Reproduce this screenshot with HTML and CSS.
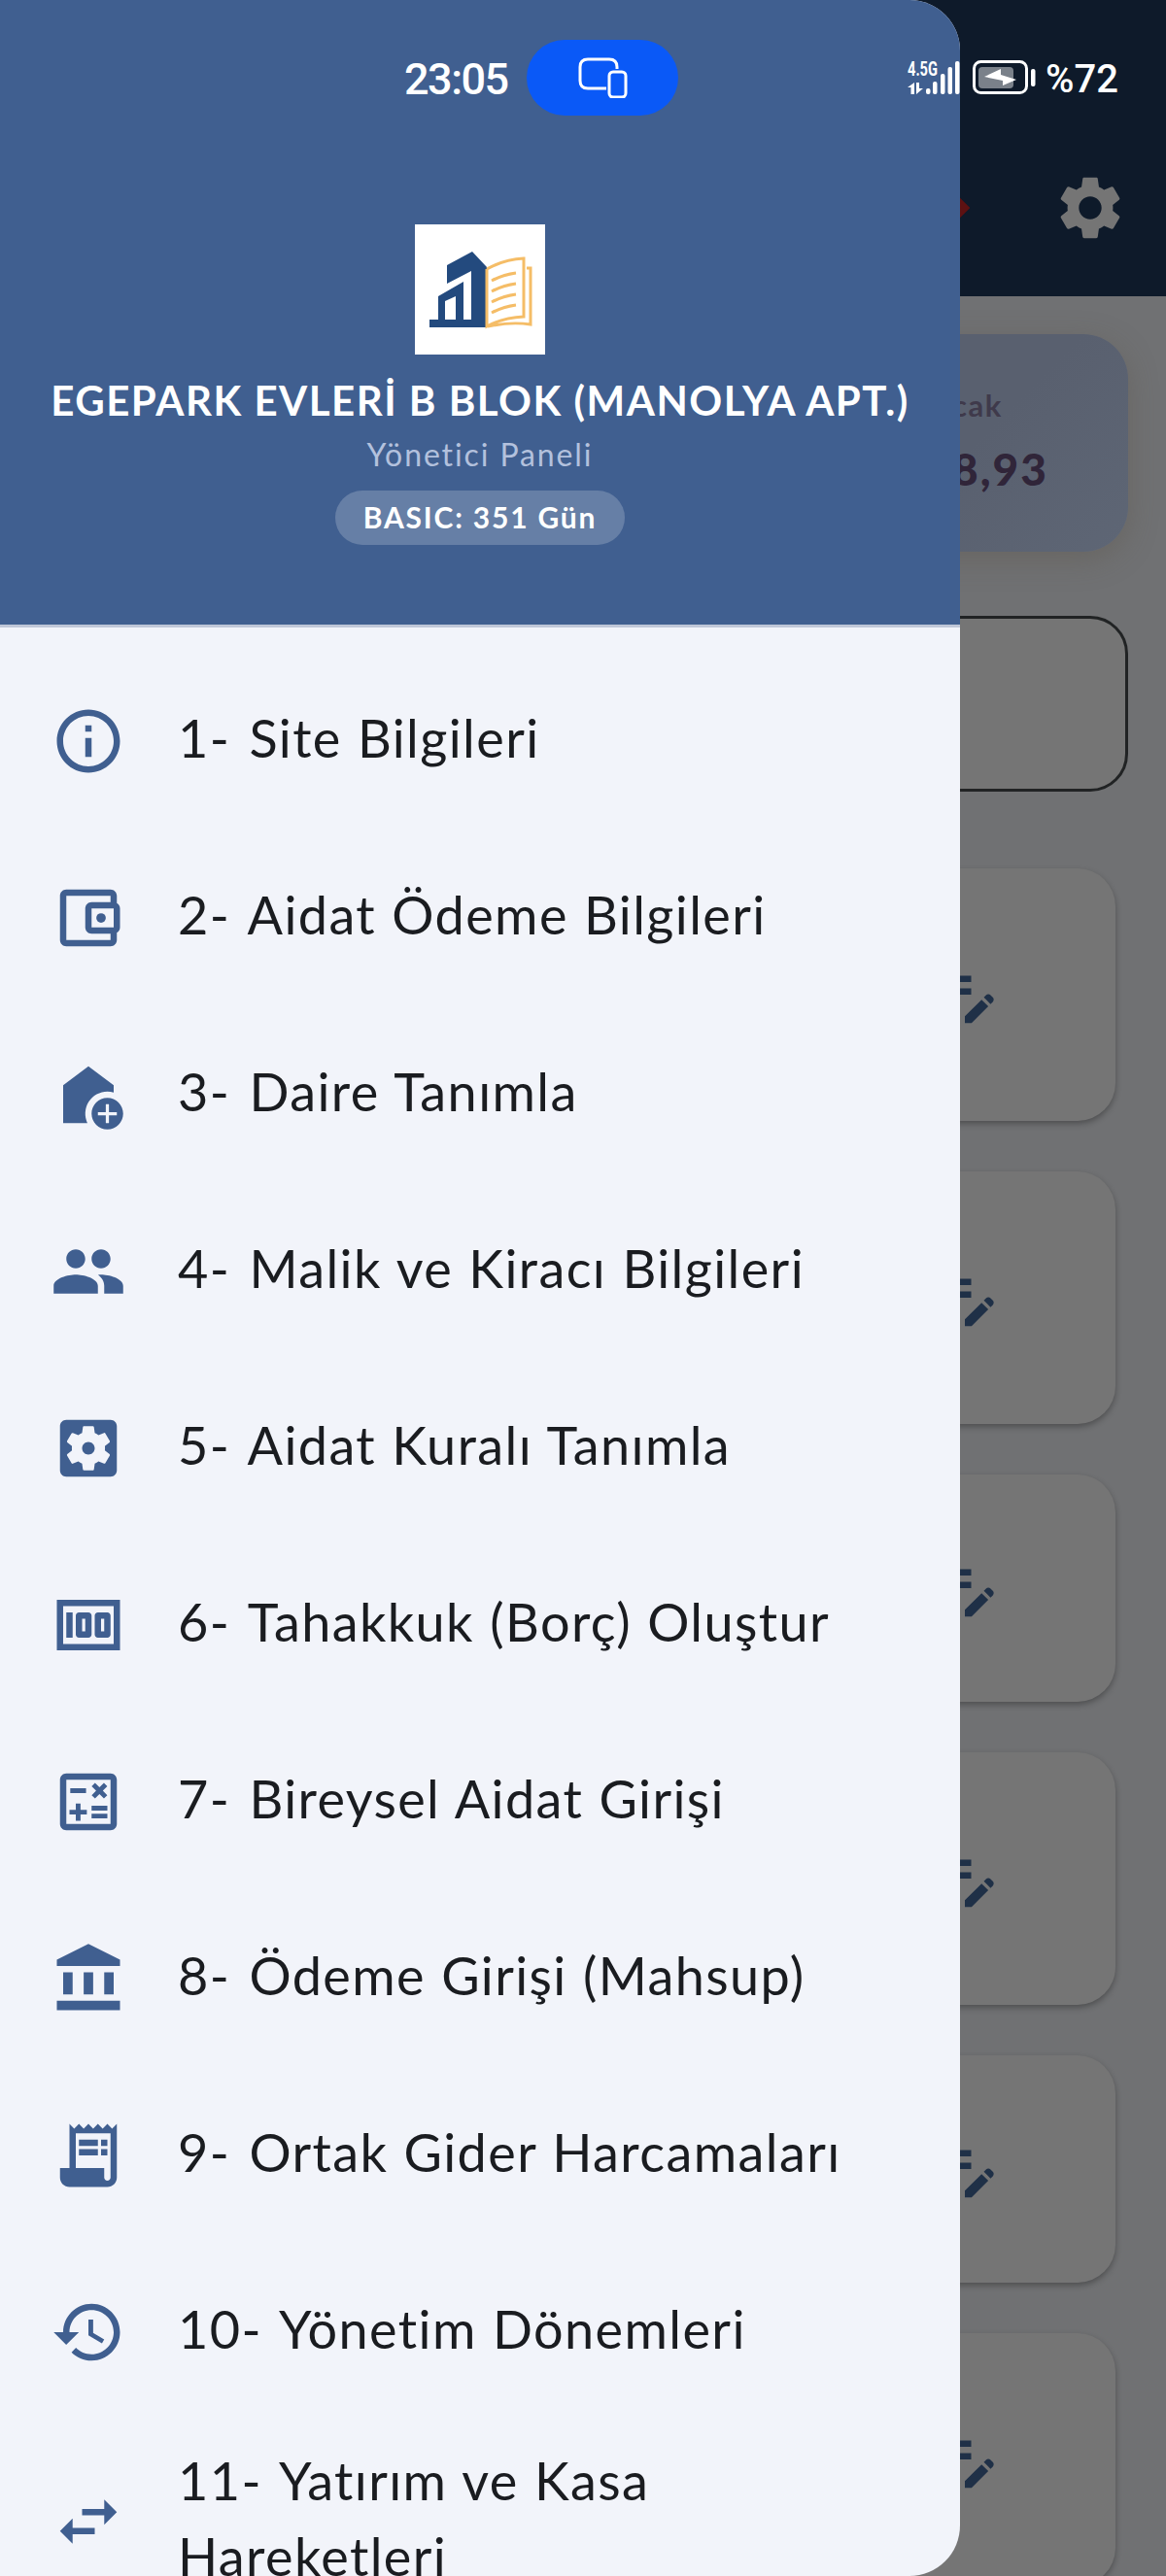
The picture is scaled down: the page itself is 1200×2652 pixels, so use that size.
FILE: index.html
```
<!DOCTYPE html>
<html lang="tr">
<head>
  <meta charset="UTF-8">
  <meta name="viewport" content="width=device-width, initial-scale=1.0">
  <title>Yönetici Paneli</title>
  <link rel="stylesheet" href="styles.css">
</head>
<body>
  <div class="screen">
    <main class="page">
      <div class="appbar">
        <svg class="badge" viewBox="0 0 24 24"><path d="M12 2l10 10-10 10L2 12z"/></svg>
        <svg class="gear" viewBox="0 0 24 24"><path d="M19.14 12.94c.04-.3.06-.61.06-.94 0-.32-.02-.64-.07-.94l2.03-1.58c.18-.14.23-.41.12-.61l-1.92-3.32c-.12-.22-.37-.29-.59-.22l-2.39.96c-.5-.38-1.03-.7-1.62-.94l-.36-2.54c-.04-.24-.24-.41-.48-.41h-3.84c-.24 0-.43.17-.47.41l-.36 2.54c-.59.24-1.13.57-1.62.94l-2.39-.96c-.22-.08-.47 0-.59.22L2.74 8.87c-.12.21-.08.47.12.61l2.03 1.58c-.05.3-.09.63-.09.94s.02.64.07.94l-2.03 1.58c-.18.14-.23.41-.12.61l1.92 3.32c.12.22.37.29.59.22l2.39-.96c.5.38 1.03.7 1.62.94l.36 2.54c.05.24.24.41.48.41h3.84c.24 0 .44-.17.47-.41l.36-2.54c.59-.24 1.13-.56 1.62-.94l2.39.96c.22.08.47 0 .59-.22l1.92-3.32c.12-.22.07-.47-.12-.61l-2.01-1.58zM12 15.6c-1.98 0-3.6-1.62-3.6-3.6s1.62-3.6 3.6-3.6 3.6 1.62 3.6 3.6-1.62 3.6-3.6 3.6z"/></svg>
      </div>
      <div class="summary">
        <span class="summary-label">cak</span>
        <strong class="summary-value">8,93</strong>
      </div>
      <div class="search"></div>
      <div class="cards">
        <div class="card"><svg class="edit" viewBox="0 0 24 24"><use href="#note"/></svg></div>
        <div class="card"><svg class="edit" viewBox="0 0 24 24"><use href="#note"/></svg></div>
        <div class="card card-short"><svg class="edit" viewBox="0 0 24 24"><use href="#note"/></svg></div>
        <div class="card"><svg class="edit" viewBox="0 0 24 24"><use href="#note"/></svg></div>
        <div class="card card-short"><svg class="edit" viewBox="0 0 24 24"><use href="#note"/></svg></div>
        <div class="card"><svg class="edit" viewBox="0 0 24 24"><use href="#note"/></svg></div>
      </div>
    </main>

    <aside class="drawer">
      <header class="drawer-header">
        <svg class="logo" viewBox="0 0 134 134">
          <path fill="#fff" d="M0 0h134v134H0z"/>
          <path fill="#234a7e" d="M15 98h9V74l26-15v39h8V48L33 61V42l26-14 15 16v62H15zM31 98h11V74l-11 5z" fill-rule="evenodd"/>
          <g fill="none" stroke="#f5bd67" stroke-width="3">
            <path d="M74 46q18-10 38-11v60q-21 1-38 10V46M115 45h4v58q-20-3-44 2"/>
            <path d="M79 58q11-6 25-8M79 69q11-6 25-8M79 80q11-6 25-8M79 91q11-6 25-8"/>
          </g>
        </svg>
        <h1 class="site-name">EGEPARK EVLERİ B BLOK (MANOLYA APT.)</h1>
        <p class="role">Yönetici Paneli</p>
        <span class="plan">BASIC: 351 Gün</span>
      </header>

      <nav class="menu">
        <a class="item"><svg viewBox="0 0 24 24"><path d="M11 7h2v2h-2zm0 4h2v6h-2zm1-9C6.480 2 2 6.480 2 12s4.480 10 10 10 10-4.480 10-10S17.520 2 12 2zm0 18c-4.410 0-8-3.590-8-8s3.590-8 8-8 8 3.590 8 8-3.590 8-8 8z"/></svg><span><b>1-</b> Site Bilgileri</span></a>
        <a class="item"><svg viewBox="0 0 24 24"><path d="M21 7.280V5c0-1.100-.9-2-2-2H5c-1.110 0-2 .9-2 2v14c0 1.100.89 2 2 2h14c1.100 0 2-.9 2-2v-2.280c.59-.35 1-.98 1-1.720V9c0-.74-.41-1.370-1-1.720zM20 9v6h-7V9h7zM5 19V5h14v2h-6c-1.100 0-2 .9-2 2v6c0 1.100.9 2 2 2h6v2H5z"/><circle cx="16" cy="12" r="1.500"/></svg><span><b>2-</b> Aidat Ödeme Bilgileri</span></a>
        <a class="item"><svg viewBox="0 0 24 24"><path d="M18 11c.7 0 1.370.1 2 .29V9l-8-6-8 6v12h7.680A6.995 6.995 0 0 1 18 11z"/><path d="M18 13c-2.760 0-5 2.240-5 5s2.240 5 5 5 5-2.240 5-5-2.240-5-5-5zm3 5.500h-2.500V21h-1v-2.500H15v-1h2.500V15h1v2.500H21v1z"/></svg><span><b>3-</b> Daire Tanımla</span></a>
        <a class="item"><svg viewBox="0 0 24 24"><path d="M16 11c1.660 0 2.990-1.340 2.990-3S17.660 5 16 5s-3 1.340-3 3 1.340 3 3 3zm-8 0c1.660 0 2.990-1.340 2.990-3S9.660 5 8 5 5 6.340 5 8s1.340 3 3 3zm0 2c-2.330 0-7 1.170-7 3.500V19h14v-2.500c0-2.330-4.670-3.500-7-3.500zm8 0c-.29 0-.62.02-.97.05 1.160.84 1.970 1.970 1.970 3.450V19h6v-2.500c0-2.330-4.670-3.500-7-3.500z"/></svg><span><b>4-</b> Malik ve Kiracı Bilgileri</span></a>
        <a class="item"><svg viewBox="0 0 24 24"><path d="M12 10c-1.100 0-2 .9-2 2s.9 2 2 2 2-.9 2-2-.9-2-2-2zm7-7H5c-1.110 0-2 .9-2 2v14c0 1.100.89 2 2 2h14c1.110 0 2-.9 2-2V5c0-1.100-.89-2-2-2zm-1.750 9c0 .23-.02.46-.05.68l1.480 1.160c.13.11.17.3.08.45l-1.400 2.420c-.09.15-.27.21-.43.15l-1.740-.7c-.36.28-.76.51-1.180.69l-.26 1.850c-.03.17-.18.3-.35.3h-2.800c-.17 0-.32-.13-.35-.29l-.26-1.850c-.43-.18-.82-.41-1.180-.69l-1.740.7c-.16.06-.34 0-.43-.15l-1.400-2.420c-.09-.15-.05-.34.08-.45l1.480-1.160c-.03-.23-.05-.46-.05-.69s.02-.46.05-.68l-1.480-1.160c-.13-.11-.17-.3-.08-.45l1.400-2.420c.09-.15.27-.21.43-.15l1.740.7c.36-.28.76-.51 1.180-.69l.26-1.850c.03-.17.18-.3.35-.3h2.800c.17 0 .32.13.35.29l.26 1.850c.43.18.82.41 1.180.69l1.740-.7c.16-.06.34 0 .43.15l1.400 2.420c.09.15.05.34-.08.45l-1.480 1.160c.03.23.05.46.05.69z"/></svg><span><b>5-</b> Aidat Kuralı Tanımla</span></a>
        <a class="item"><svg viewBox="0 0 24 24"><path d="M15 16h3c.55 0 1-.45 1-1V9c0-.55-.45-1-1-1h-3c-.55 0-1 .45-1 1v6c0 .55.45 1 1 1zm1-6h1v4h-1v-4zm-7 6h3c.55 0 1-.45 1-1V9c0-.55-.45-1-1-1H9c-.55 0-1 .45-1 1v6c0 .55.45 1 1 1zm1-6h1v4h-1v-4zM5 8h2v8H5zM2 4v16h20V4H2zm18 14H4V6h16v12z"/></svg><span><b>6-</b> Tahakkuk (Borç) Oluştur</span></a>
        <a class="item"><svg viewBox="0 0 24 24"><path d="M19 3H5c-1.100 0-2 .9-2 2v14c0 1.100.9 2 2 2h14c1.100 0 2-.9 2-2V5c0-1.100-.9-2-2-2zm0 16H5V5h14v14z"/><path d="M6.250 7.720h5v1.500h-5zM13 15.750h5v1.500h-5zM13 13.250h5v1.500h-5zM8 18h1.500v-2h2v-1.500h-2v-2H8v2H6V16h2zM14.090 10.950l1.410-1.410 1.410 1.410 1.060-1.060-1.410-1.420 1.410-1.410L16.910 6 15.500 7.410 14.090 6l-1.060 1.060 1.410 1.410-1.410 1.420z"/></svg><span><b>7-</b> Bireysel Aidat Girişi</span></a>
        <a class="item"><svg viewBox="0 0 24 24"><path d="M4 10v7h3v-7H4zm6.500 0v7h3v-7h-3zM2 22h20v-3H2v3zm15-12v7h3v-7h-3zm-5-9L2 6v2h20V6L12 1z"/></svg><span><b>8-</b> Ödeme Girişi (Mahsup)</span></a>
        <a class="item"><svg viewBox="0 0 24 24"><path d="M19.500 3.500L18 2l-1.500 1.500L15 2l-1.500 1.500L12 2l-1.500 1.500L9 2 7.500 3.500 6 2v14H3v3c0 1.660 1.340 3 3 3h12c1.660 0 3-1.340 3-3V2l-1.500 1.500zM19 19c0 .55-.45 1-1 1s-1-.45-1-1v-3H8V5h11v14z"/><path d="M9 7h6v2H9zM16 7h2v2h-2zM9 10h6v2H9zM16 10h2v2h-2z"/></svg><span><b>9-</b> Ortak Gider Harcamaları</span></a>
        <a class="item"><svg viewBox="0 0 24 24"><path d="M13 3c-4.970 0-9 4.030-9 9H1l3.890 3.890.07.14L9 12H6c0-3.870 3.130-7 7-7s7 3.130 7 7-3.130 7-7 7c-1.930 0-3.680-.79-4.940-2.060l-1.420 1.420C8.270 19.990 10.510 21 13 21c4.970 0 9-4.030 9-9s-4.030-9-9-9zm-1 5v5l4.280 2.540.72-1.210-3.500-2.080V8H12z"/></svg><span><b>10-</b> Yönetim Dönemleri</span></a>
        <a class="item"><svg viewBox="0 0 24 24"><path d="M6.990 11L3 15l3.990 4v-3H14v-2H6.990v-3zM21 9l-3.990-4v3H10v2h7.010v3L21 9z"/></svg><span><b>11-</b> Yatırım ve Kasa Hareketleri</span></a>
      </nav>
    </aside>

    <div class="statusbar">
      <span class="clock">23:05</span>
      <span class="cast">
        <svg viewBox="0 0 52 42" fill="none" stroke="#fff" stroke-width="3"><path d="M30 32H11q-8 0-8-8V10q0-8 8-8h22q8 0 8 8v2"/><rect x="33" y="15" width="17" height="26" rx="4"/></svg>
      </span>
      <span class="signal">
        <span class="net">4.5G</span>
        <svg viewBox="0 0 54 34" fill="#fff"><path d="M0 27l7-5v12H3.500v-7zM9 22h3v6h4l-7 6z"/><rect x="19" y="28" width="4.500" height="6" rx="2"/><rect x="26" y="21" width="4.500" height="13" rx="2"/><rect x="34" y="13" width="4.500" height="21" rx="2"/><rect x="41.500" y="6" width="4.500" height="28" rx="2"/><rect x="49" y="0" width="4.500" height="34" rx="2"/></svg>
      </span>
      <svg class="battery" viewBox="0 0 66 36"><rect x="1.500" y="1.500" width="54" height="32" rx="7" fill="none" stroke="#fff" stroke-width="3"/><rect x="6" y="7" width="36" height="22" rx="4" fill="#fff" opacity=".45"/><path fill="#fff" d="M12 17l17-8v6l16 5-14 6v-5z"/><rect x="60" y="9" width="4.500" height="18" rx="2" fill="#fff"/></svg>
      <span class="percent">%72</span>
    </div>
  </div>

  <svg width="0" height="0" class="defs">
    <symbol id="note" viewBox="0 0 24 24"><path d="M3 10h11v2H3v-2zm0-2h11V6H3v2zm0 8h7v-2H3v2zm15.010-3.130l.71-.71c.39-.39 1.020-.39 1.410 0l.71.71c.39.39.39 1.020 0 1.410l-.71.71-2.120-2.120zm-.71.71l-5.300 5.300V21h2.120l5.300-5.300-2.120-2.120z"/></symbol>
  </svg>
</body>
</html>
```
FILE: styles.css
```
* { box-sizing: border-box; }
body {
  margin: 0;
  font-family: Lato, "Noto Sans", sans-serif;
}
.screen {
  position: relative;
  width: 1200px;
  height: 2652px;
  overflow: hidden;
  background: #707173;
}

/* dimmed page behind the drawer */
.page {
  display: flex;
  flex-direction: column;
}
.appbar {
  height: 305px;
  padding: 123px 39px 0 0;
  display: flex;
  justify-content: flex-end;
  align-items: center;
  background: #0e1a2a;
  gap: 82px;
}
.badge { width: 32px; fill: #5c1112; }
.gear { width: 78px; fill: #757575; }
.summary {
  height: 224px;
  margin: 39px 39px 0;
  padding: 51px 0 0 941px;
  border-radius: 46px;
  background: linear-gradient(135deg, #59606f 80%, #5e6675);
  box-shadow: 0 8px 30px rgba(90, 80, 65, 0.35);
  display: flex;
  flex-direction: column;
}
.summary-label {
  font-size: 31px;
  line-height: 44px;
  font-weight: bold;
  letter-spacing: 1.6px;
  color: #3f3a4b;
}
.summary-value {
  font-size: 46px;
  line-height: 88px;
  font-weight: 900;
  letter-spacing: 2px;
  color: #302539;
}
.search {
  height: 181px;
  margin: 66px 39px 79px;
  border: 3px solid #212324;
  border-radius: 39px;
  background: #757575;
}
.cards {
  display: flex;
  flex-direction: column;
  gap: 52px;
  padding: 0 52px;
}
.card {
  height: 260px;
  flex: none;
  padding-left: 902px;
  display: flex;
  align-items: center;
  border-radius: 39px;
  background: #757575;
  box-shadow: 0 3px 6px rgba(0, 0, 0, 0.3);
}
.card-short { height: 234px; }
.edit { width: 78px; fill: #1f3047; }

/* drawer */
.drawer {
  position: absolute;
  top: 0;
  left: 0;
  width: 988px;
  height: 2652px;
  overflow: hidden;
  border-radius: 0 52px 52px 0;
  background: #f2f4fa;
}
.drawer-header {
  height: 646px;
  padding-top: 231px;
  display: flex;
  flex-direction: column;
  align-items: center;
  background: #405f90;
  border-bottom: 3px solid #bfc7d8;
  color: #fff;
}
.logo { width: 134px; height: 134px; }
.site-name {
  margin: 19px 0 0;
  font-size: 42px;
  line-height: 56px;
  letter-spacing: 1.5px;
  white-space: nowrap;
}
.role {
  margin: 0;
  font-size: 32px;
  line-height: 56px;
  letter-spacing: 1.9px;
  color: #b3c1dd;
}
.plan {
  height: 56px;
  margin-top: 9px;
  padding: 0 29px;
  border-radius: 28px;
  background: #667fa6;
  font-size: 30px;
  line-height: 54px;
  font-weight: bold;
  letter-spacing: 1.8px;
}
.menu { padding-top: 26px; }
.item {
  min-height: 182px;
  padding: 26px 78px 26px 52px;
  display: flex;
  align-items: center;
  gap: 53px;
  font-size: 54px;
  line-height: 78px;
  letter-spacing: 1.4px;
  word-spacing: 1px;
  color: #1a1c20;
}
.item span { margin: -3px 0 3px; }
.item b {
  margin-right: 3px;
  font-weight: normal;
}
.item svg {
  width: 78px;
  height: 78px;
  flex: none;
  fill: #405f90;
}

/* phone status bar */
.statusbar {
  position: absolute;
  top: 41px;
  left: 0;
  width: 1200px;
  height: 78px;
  padding: 0 49px 0 416px;
  display: flex;
  align-items: center;
  color: #fff;
  font-family: Roboto, sans-serif;
  font-weight: 500;
}
.clock {
  width: 126px;
  padding-top: 3px;
  font-size: 45px;
  letter-spacing: -1.5px;
}
.cast {
  width: 156px;
  height: 78px;
  display: flex;
  align-items: center;
  justify-content: center;
  border-radius: 39px;
  background: #0a59f7;
}
.cast svg { width: 52px; }
.signal {
  width: 54px;
  margin-left: auto;
  display: grid;
}
.signal .net, .signal svg { grid-area: 1 / 1; }
.net {
  font-size: 20px;
  line-height: 17px;
  font-weight: 700;
  transform: scaleX(0.73);
  transform-origin: left;
}
.battery { width: 66px; margin: 0 9px 0 13px; }
.percent {
  padding-top: 3px;
  font-size: 40px;
}
.defs { position: absolute; }
```
